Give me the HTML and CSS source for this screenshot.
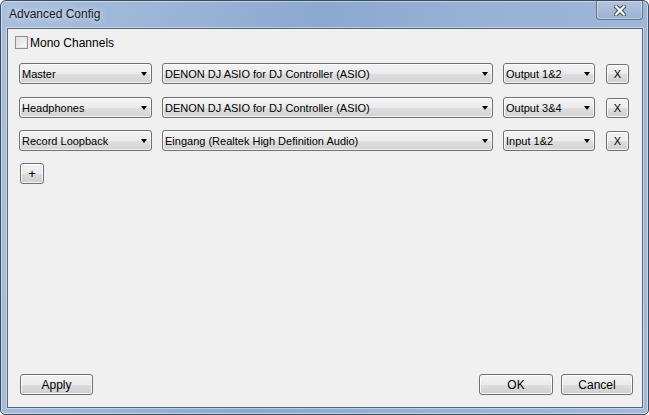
FILE: index.html
```html
<!doctype html>
<html lang="en">
<head>
    <meta charset="utf-8">
    <title>Advanced Config</title>
    <link rel="stylesheet" href="styles.css">
</head>
<body>
    <div class="window">
        <div class="titlebar">
            <span class="title">Advanced Config</span>
            <div class="close">
                <svg width="12" height="11" viewBox="0 0 12 11">
                    <path d="M2 1.5 L10 9.5 M10 1.5 L2 9.5" stroke="#3d4a5a" stroke-width="4.2" stroke-linecap="square"/>
                    <path d="M2 1.5 L10 9.5 M10 1.5 L2 9.5" stroke="#ffffff" stroke-width="2.2" stroke-linecap="square"/>
                </svg>
            </div>
        </div>
        <div class="client">
            <label class="check">
                <span class="box"></span>
                <span>Mono Channels</span>
            </label>

            <div class="rows">
                <div class="row first">
                    <div class="combo c-type">Master</div>
                    <div class="combo c-device">DENON DJ ASIO for DJ Controller (ASIO)</div>
                    <div class="combo c-chan">Output 1&amp;2</div>
                    <div class="btn small">X</div>
                </div>
                <div class="row">
                    <div class="combo c-type">Headphones</div>
                    <div class="combo c-device">DENON DJ ASIO for DJ Controller (ASIO)</div>
                    <div class="combo c-chan">Output 3&amp;4</div>
                    <div class="btn small">X</div>
                </div>
                <div class="row">
                    <div class="combo c-type">Record Loopback</div>
                    <div class="combo c-device">Eingang (Realtek High Definition Audio)</div>
                    <div class="combo c-chan">Input 1&amp;2</div>
                    <div class="btn small">X</div>
                </div>
                <div class="row">
                    <div class="btn plus">+</div>
                </div>
            </div>

            <div class="footer">
                <div class="btn wide apply">Apply</div>
                <div class="right">
                    <div class="btn wide ok">OK</div>
                    <div class="btn wide cancel">Cancel</div>
                </div>
            </div>
        </div>
    </div>
</body>
</html>
```

FILE: styles.css
```css
html, body {
    margin: 0;
    padding: 0;
    background: #ffffff;
}

.window {
    width: 649px;
    height: 415px;
    box-sizing: border-box;
    border: 1px solid #3d4b5e;
    border-radius: 6px 6px 5px 5px;
    background: linear-gradient(100deg, #a9bfdc 0%, #9bb4d6 25%, #8ba8cf 45%, #97b1d4 65%, #a2b9d8 100%);
    box-shadow: inset 0 0 0 1px rgba(255, 255, 255, 0.45);
    padding: 0 5px 6px 6px;
    display: flex;
    flex-direction: column;
    font-family: "Liberation Sans", Arial, sans-serif;
}

.titlebar {
    height: 27px;
    display: flex;
    justify-content: space-between;
    align-items: flex-start;
}

.title {
    margin: 6px 0 0 2px;
    font-size: 12px;
    color: #1a1a1a;
    text-shadow: 0 0 6px rgba(255, 255, 255, 0.9);
}

.close {
    width: 45px;
    height: 18px;
    border: 1px solid #66778f;
    border-top: none;
    border-radius: 0 0 4px 4px;
    background: linear-gradient(#b2c4de, #9cb2d2);
    box-shadow: inset 0 0 0 1px rgba(255, 255, 255, 0.35);
    display: flex;
    align-items: center;
    justify-content: center;
}

.close svg {
    margin: 1px 0 0 1px;
}

.client {
    flex: 1;
    background: #f0f0f0;
    border: 1px solid #55667d;
    box-shadow: 0 0 0 1px rgba(255, 255, 255, 0.4);
    display: flex;
    flex-direction: column;
    padding: 7px 9px 12px 7px;
    font-size: 11px;
    color: #000;
}

.check {
    display: flex;
    align-items: center;
    gap: 2px;
    font-size: 12px;
    height: 13px;
}

.box {
    width: 11px;
    height: 11px;
    border: 1px solid #8e8f8f;
    background: linear-gradient(135deg, #dcdcdc, #fdfdfd);
    box-shadow: inset 0 0 0 1px #e6e6e6;
}

.rows {
    margin-top: 14px;
    padding-left: 4px;
    display: flex;
    flex-direction: column;
    gap: 12px;
}

.row {
    display: flex;
    height: 21px;
    align-items: stretch;
}

.row.first {
    margin-bottom: 1px;
}

.combo {
    box-sizing: border-box;
    border: 1px solid #707070;
    border-radius: 3px;
    background: linear-gradient(#f3f3f3 0%, #ececec 50%, #dedede 51%, #d3d3d3 100%);
    box-shadow: inset 0 0 0 1px rgba(255, 255, 255, 0.7);
    padding: 0 0 0 2px;
    display: flex;
    align-items: center;
    position: relative;
    white-space: nowrap;
}

.combo::after {
    content: "";
    position: absolute;
    right: 4px;
    top: 8px;
    border-left: 3.5px solid transparent;
    border-right: 3.5px solid transparent;
    border-top: 4px solid #000;
}

.c-type {
    width: 133px;
}

.c-device {
    width: 331px;
    margin-left: 10px;
}

.c-chan {
    width: 92px;
    margin-left: 10px;
}

.btn {
    box-sizing: border-box;
    border: 1px solid #707070;
    border-radius: 3px;
    background: linear-gradient(#f2f2f2 0%, #ebebeb 50%, #dddddd 51%, #cfcfcf 100%);
    box-shadow: inset 0 0 0 1px rgba(255, 255, 255, 0.8);
    display: flex;
    align-items: center;
    justify-content: center;
}

.small {
    width: 23px;
    margin-left: 11px;
    margin-top: 1px;
}

.plus {
    width: 24px;
    margin-left: 1px;
    font-size: 13px;
}

.footer {
    margin-top: auto;
    display: flex;
    justify-content: space-between;
    height: 21px;
    font-size: 12px;
}

.right {
    display: flex;
    gap: 8px;
}

.apply {
    width: 73px;
    margin-left: 5px;
}

.ok {
    width: 74px;
}

.cancel {
    width: 72px;
}
```
